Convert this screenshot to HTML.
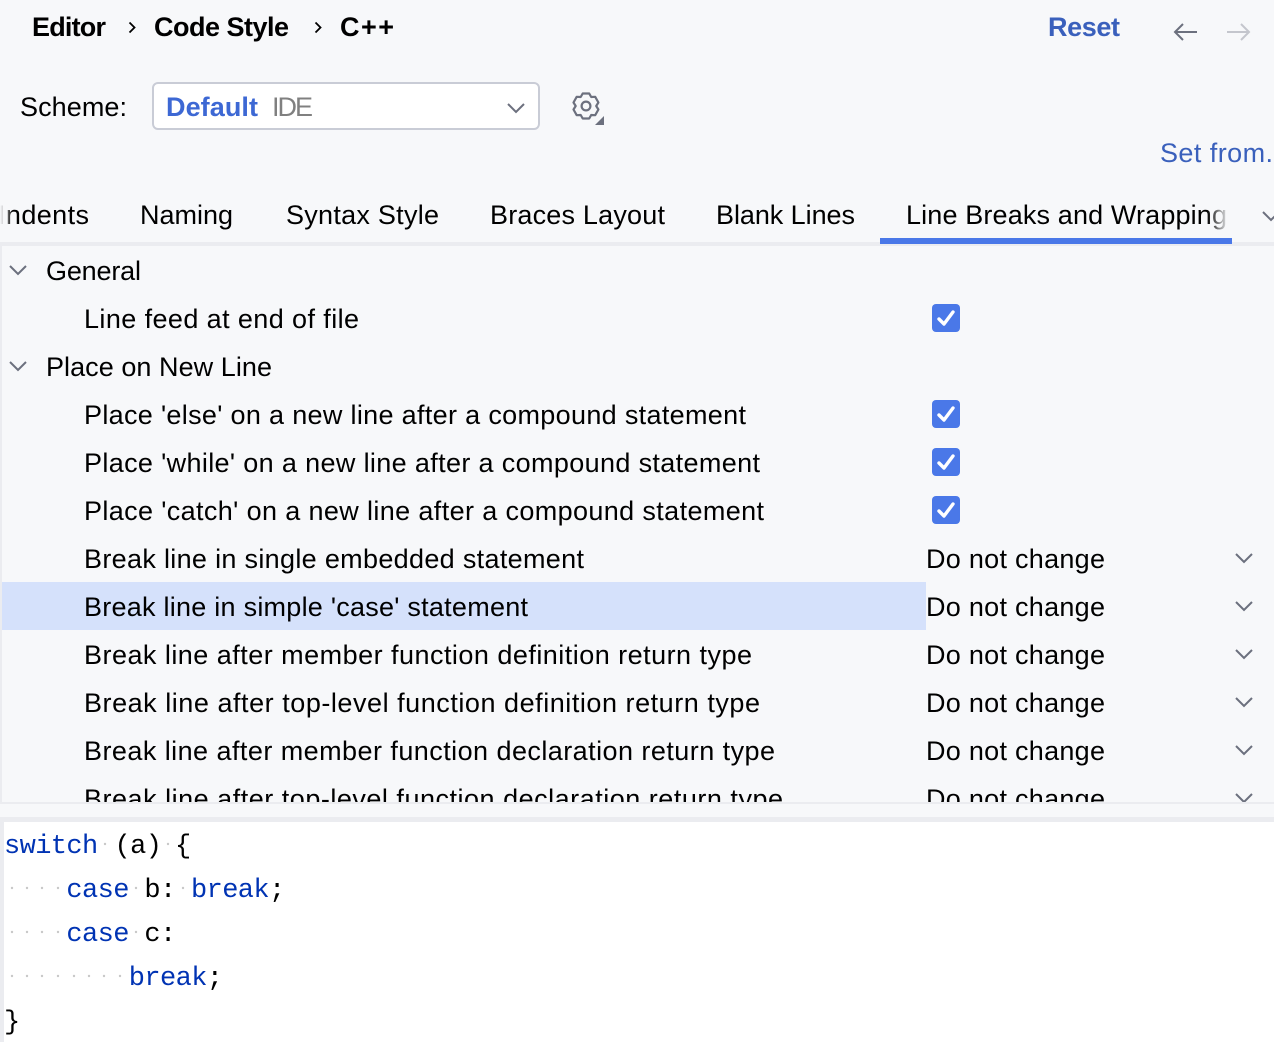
<!DOCTYPE html>
<html><head><meta charset="utf-8"><style>
html,body{margin:0;padding:0;background:#f7f8fa;width:1274px;height:1042px;overflow:hidden}
svg{display:block}
text{font-family:"Liberation Sans",sans-serif;font-size:27px;fill:#000;white-space:pre}
.m{font-family:"Liberation Mono",monospace;font-size:27px;letter-spacing:-.6px}
.k{fill:#0033b3}
.b{font-weight:bold}
.ch{fill:none;stroke:#6c707e;stroke-width:2}
</style></head><body>
<svg width="1274" height="1042" viewBox="0 0 1274 1042" xmlns="http://www.w3.org/2000/svg">
<defs>
<clipPath id="list"><rect x="0" y="246" width="1274" height="556"/></clipPath>
<linearGradient id="fl"><stop offset="0" stop-color="#f7f8fa"/><stop offset=".35" stop-color="#f7f8fa" stop-opacity=".8"/><stop offset="1" stop-color="#f7f8fa" stop-opacity="0"/></linearGradient>
<linearGradient id="fr"><stop offset="0" stop-color="#f7f8fa" stop-opacity="0"/><stop offset="1" stop-color="#f7f8fa"/></linearGradient>
</defs>
<rect width="1274" height="1042" fill="#f7f8fa"/>

<!-- breadcrumb -->
<text class="b" x="32" y="36" textLength="74">Editor</text>
<path d="M129.500 22.500l5 5-5 5" fill="none" stroke="#000" stroke-width="1.800"/>
<text class="b" x="154" y="36" textLength="135">Code Style</text>
<path d="M315.500 22.500l5 5-5 5" fill="none" stroke="#000" stroke-width="1.800"/>
<text class="b" x="340" y="36" textLength="54">C++</text>
<text class="b" x="1048" y="36" textLength="72" style="fill:#3a60bc">Reset</text>
<path d="M1197 32h-22M1183 24l-8 8 8 8" fill="none" stroke="#6c707e" stroke-width="2"/>
<path d="M1227 32h22M1241 24l8 8-8 8" fill="none" stroke="#c4c6cd" stroke-width="2"/>

<!-- scheme -->
<text x="20" y="116" textLength="107">Scheme:</text>
<rect x="153" y="83" width="386" height="46" rx="5" fill="#fff" stroke="#c9ccd6" stroke-width="2"/>
<text class="b" x="166" y="116" textLength="92" style="fill:#3d68d4">Default</text>
<text x="272" y="116" textLength="41" style="fill:#808080">IDE</text>
<path class="ch" d="M508 104l8 8 8-8"/>
<g fill="none" stroke="#6c707e" stroke-width="2.200" transform="translate(1.200 -1)">
<path d="M581.500 94.500h6.500l2 3.500 4-.2 3.200 5.700-2.200 3.500 2.200 3.500-3.200 5.700-4-.2-2 3.500h-6.500l-2-3.500-4 .2-3.200-5.700 2.200-3.500-2.200-3.500 3.200-5.700 4 .2z" stroke-linejoin="round"/>
<circle cx="584.800" cy="107" r="4.400"/>
</g>
<path d="M604 116v9h-9z" fill="#6c707e"/>
<text x="1160" y="162" textLength="113" style="fill:#3a60bc">Set from.</text>

<!-- tabs -->
<text x="-2" y="224" textLength="91">Indents</text>
<rect x="0" y="196" width="12" height="40" fill="url(#fl)"/>
<text x="140" y="224" textLength="93">Naming</text>
<text x="286" y="224" textLength="153">Syntax Style</text>
<text x="490" y="224" textLength="175">Braces Layout</text>
<text x="716" y="224" textLength="139">Blank Lines</text>
<text x="906" y="224" textLength="321">Line Breaks and Wrapping</text>
<rect x="1207" y="196" width="22" height="40" fill="url(#fr)"/>
<path class="ch" d="M1263 212l8 8 8-8"/>
<rect x="0" y="242" width="1274" height="4" fill="#ebecf0"/>
<rect x="880" y="238" width="352" height="6" fill="#4a78e8"/>

<!-- list -->
<rect x="0" y="246" width="2" height="556" fill="#ebecf0"/>
<rect x="2" y="582" width="924" height="48" fill="#d5e1fb"/>
<g clip-path="url(#list)">
<path class="ch" d="M10 266l8 8 8-8M10 362l8 8 8-8"/>
<text x="46" y="280" textLength="95">General</text>
<text x="84" y="328" textLength="275">Line feed at end of file</text>
<text x="46" y="376" textLength="226">Place on New Line</text>
<text x="84" y="424" textLength="662">Place 'else' on a new line after a compound statement</text>
<text x="84" y="472" textLength="676">Place 'while' on a new line after a compound statement</text>
<text x="84" y="520" textLength="680">Place 'catch' on a new line after a compound statement</text>
<text x="84" y="568" textLength="500">Break line in single embedded statement</text>
<text x="84" y="616" textLength="444">Break line in simple 'case' statement</text>
<text x="84" y="664" textLength="668">Break line after member function definition return type</text>
<text x="84" y="712" textLength="676">Break line after top-level function definition return type</text>
<text x="84" y="760" textLength="691">Break line after member function declaration return type</text>
<text x="84" y="808" textLength="699">Break line after top-level function declaration return type</text>
<text x="926" y="568" textLength="179">Do not change</text>
<text x="926" y="616" textLength="179">Do not change</text>
<text x="926" y="664" textLength="179">Do not change</text>
<text x="926" y="712" textLength="179">Do not change</text>
<text x="926" y="760" textLength="179">Do not change</text>
<text x="926" y="808" textLength="179">Do not change</text>
<path class="ch" d="M1236 554l8 8 8-8M1236 602l8 8 8-8M1236 650l8 8 8-8M1236 698l8 8 8-8M1236 746l8 8 8-8M1236 794l8 8 8-8"/>
</g>
<g>
<g fill="#4a78e8"><rect x="932" y="304" width="28" height="28" rx="4"/><rect x="932" y="400" width="28" height="28" rx="4"/><rect x="932" y="448" width="28" height="28" rx="4"/><rect x="932" y="496" width="28" height="28" rx="4"/></g>
<path d="M939 319l5 5 9-12M939 415l5 5 9-12M939 463l5 5 9-12M939 511l5 5 9-12" fill="none" stroke="#fff" stroke-width="3.400" stroke-linecap="round" stroke-linejoin="round"/>
</g>

<!-- dividers -->
<rect x="0" y="802" width="1274" height="2" fill="#ebecf0"/>
<rect x="0" y="817" width="1274" height="5" fill="#ebecf0"/>

<!-- code -->
<rect x="4" y="822" width="1270" height="220" fill="#fff"/>
<rect x="0" y="822" width="4" height="220" fill="#ebecf0"/>
<g fill="#c8c8c8">
<circle cx="105" cy="844" r="1.200"/><circle cx="168" cy="844" r="1.200"/>
<circle cx="12" cy="888" r="1.200"/><circle cx="27" cy="888" r="1.200"/><circle cx="42" cy="888" r="1.200"/><circle cx="58" cy="888" r="1.200"/><circle cx="136" cy="888" r="1.200"/><circle cx="183" cy="888" r="1.200"/>
<circle cx="12" cy="932" r="1.200"/><circle cx="27" cy="932" r="1.200"/><circle cx="42" cy="932" r="1.200"/><circle cx="58" cy="932" r="1.200"/><circle cx="136" cy="932" r="1.200"/>
<circle cx="12" cy="976" r="1.200"/><circle cx="27" cy="976" r="1.200"/><circle cx="42" cy="976" r="1.200"/><circle cx="58" cy="976" r="1.200"/><circle cx="74" cy="976" r="1.200"/><circle cx="89" cy="976" r="1.200"/><circle cx="104" cy="976" r="1.200"/><circle cx="120" cy="976" r="1.200"/>
</g>
<text class="m k" x="4" y="853">switch</text>
<text class="m" x="114.500" y="853">(a)</text>
<text class="m" x="175" y="853">{</text>
<text class="m k" x="66.400" y="897">case</text>
<text class="m" x="144.400" y="897">b:</text>
<text class="m k" x="191" y="897">break</text>
<text class="m" x="269" y="897">;</text>
<text class="m k" x="66.400" y="941">case</text>
<text class="m" x="144.400" y="941">c:</text>
<text class="m k" x="128.800" y="985">break</text>
<text class="m" x="206.800" y="985">;</text>
<text class="m" x="4" y="1029">}</text>
</svg>
</body></html>
